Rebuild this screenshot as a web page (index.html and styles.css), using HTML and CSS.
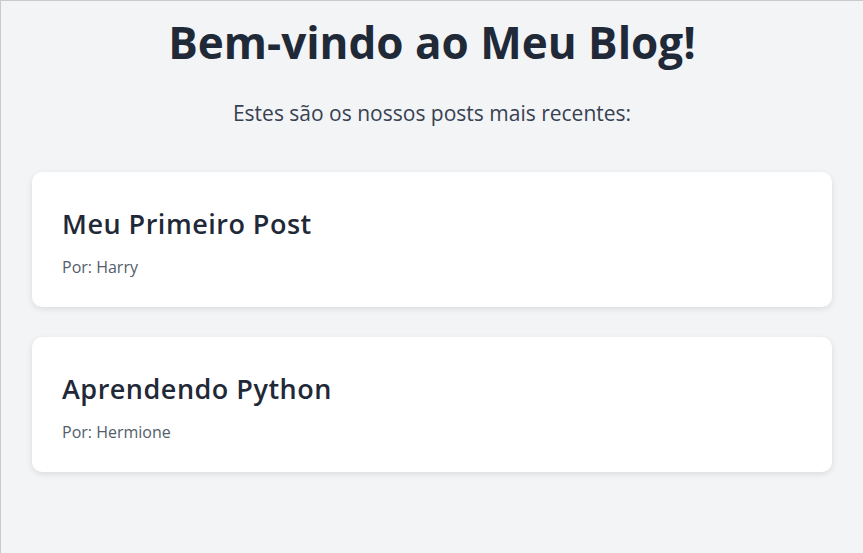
FILE: index.html
```html
<!DOCTYPE html>
<html lang="pt">
<head>
<meta charset="utf-8">
<title>Meu Blog</title>
<link rel="stylesheet" href="styles.css">
</head>
<body>
<main class="page">
  <h1 class="page-title">Bem-vindo ao Meu Blog!</h1>
  <p class="page-subtitle">Estes são os nossos posts mais recentes:</p>
  <section class="post-list">
    <article class="post-card">
      <h2 class="post-title">Meu Primeiro Post</h2>
      <p class="post-meta">Por: Harry</p>
    </article>
    <article class="post-card">
      <h2 class="post-title">Aprendendo Python</h2>
      <p class="post-meta">Por: Hermione</p>
    </article>
  </section>
</main>
</body>
</html>
```
FILE: styles.css
```css
* { box-sizing: border-box; }
html, body { margin: 0; padding: 0; }
body {
  background: #f3f4f6;
  color: #1f2937;
  font-family: "Open Sans", "Noto Sans", sans-serif;
  min-height: 100vh;
  border-top: 1px solid #c9cacc;
  border-left: 1px solid #c9cacc;
}
.page {
  max-width: 800px;
  margin: 0 auto;
  padding-top: 16px;
}
.page-title {
  margin: 0;
  text-align: center;
  font-size: 44px;
  line-height: 50px;
  font-weight: 700;
  color: #1f2937;
}
.page-subtitle {
  margin: 32px 0 0;
  text-align: center;
  font-size: 21px;
  line-height: 28px;
  color: #374151;
}
.post-list {
  margin-top: 45px;
  display: flex;
  flex-direction: column;
  gap: 30px;
}
.post-card {
  background: #ffffff;
  border-radius: 10px;
  box-shadow: 0 2px 6px rgba(0, 0, 0, 0.1);
  padding: 36px 30px 28px;
  height: 135px;
}
.post-title {
  margin: 0;
  font-size: 27px;
  line-height: 32px;
  font-weight: 600;
  letter-spacing: 0.5px;
  color: #1f2937;
}
.post-meta {
  margin: 16px 0 0;
  font-size: 16px;
  line-height: 22px;
  color: #555d6a;
}
```
